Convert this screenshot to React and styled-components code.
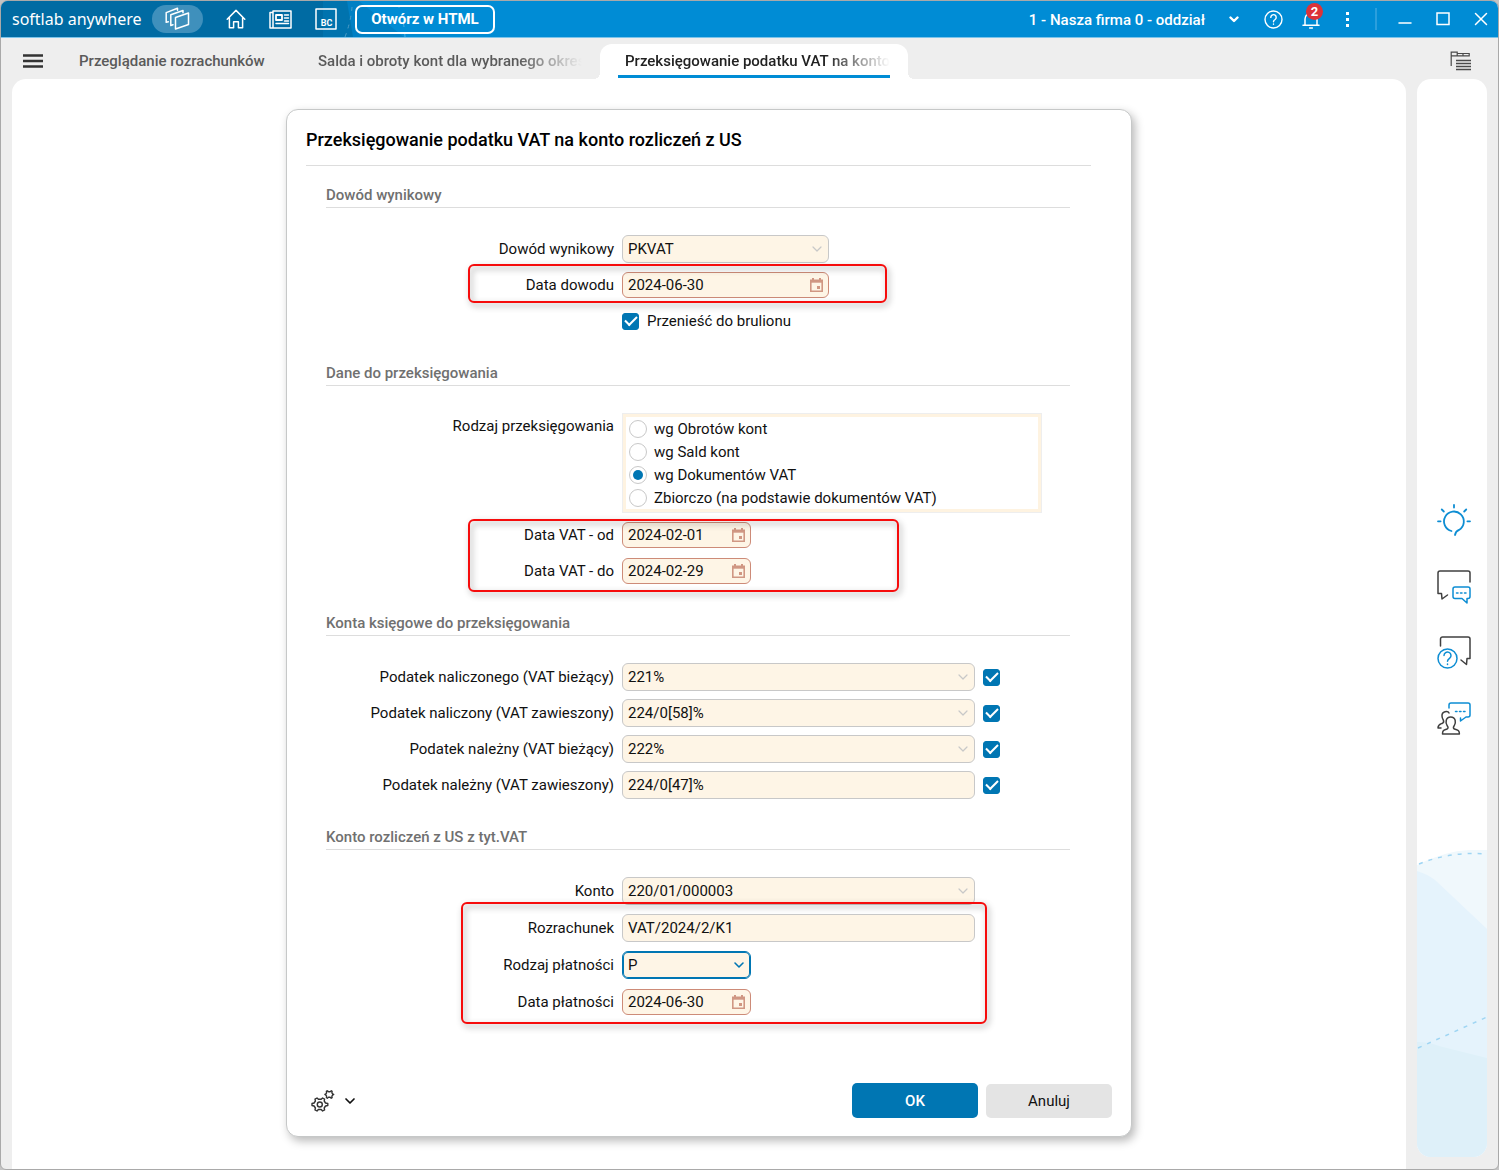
import React from 'react'
import styled, { createGlobalStyle, css } from 'styled-components'

const GlobalStyle = createGlobalStyle`
  *, *::before, *::after {
    box-sizing: border-box;
  }
  body {
    margin: 0;
    background: #c4c4c4;
    font-family: Roboto, "Liberation Sans", sans-serif;
    font-size: 15px;
    color: #111;
  }
  button, input, select {
    font: inherit;
    color: inherit;
  }
  svg {
    display: block;
    flex: none;
  }
`;

const Window = styled.div`
  display: flex;
  flex-direction: column;
  min-height: 100vh;
  border: 1px solid #a9a9a9;
  border-radius: 8px 8px 6px 6px;
  background: #eee;
  overflow: hidden;
`;

const IconButton = styled.button`
  display: flex;
  align-items: center;
  justify-content: center;
  padding: 0;
  border: 0;
  background: none;
  color: inherit;
  cursor: pointer;
`;

/* ---------- top bar ---------- */

const TopBar = styled.header`
  position: relative;
  display: flex;
  align-items: center;
  justify-content: space-between;
  height: 37px;
  padding: 0 10px 0 11px;
  background: #008cd5;
  border-bottom: 1px solid #7cc4ea;
  color: #fff;
`;

const TopBarArt = styled.svg`
  position: absolute;
  left: 0;
  top: 0;
`;

const TopLeft = styled.div`
  position: relative;
  display: flex;
  align-items: center;
`;

const Brand = styled.div`
  width: 140px;
  font-family: "Noto Sans", sans-serif;
  font-size: 16px;
  line-height: 20px;
  white-space: nowrap;
`;

const Pill = styled(IconButton)`
  width: 51px;
  height: 28px;
  border-radius: 14px;
  background: #3f90bc;
`;

const Shortcuts = styled.nav`
  display: flex;
  align-items: center;
  gap: 23px;
  margin: 0 18px 0 23px;
`;

const OpenButton = styled.button`
  width: 140px;
  height: 29px;
  padding: 0;
  border: 2px solid #fff;
  border-radius: 7px;
  background: none;
  color: #fff;
  font-weight: 700;
  white-space: nowrap;
  cursor: pointer;
`;

const TopRight = styled.div`
  display: flex;
  align-items: center;
`;

const CompanyButton = styled(IconButton)`
  gap: 24px;
  margin-right: 25px;
  padding-top: 1px;
  font-weight: 500;
  white-space: nowrap;
`;

const TopActions = styled.div`
  display: flex;
  align-items: center;
  gap: 19px;
`;

const Bell = styled(IconButton)`
  position: relative;
`;

const Badge = styled.span`
  position: absolute;
  left: 4px;
  top: -6px;
  width: 17px;
  height: 17px;
  border-radius: 50%;
  background: #dc3339;
  font-size: 13px;
  font-weight: 700;
  line-height: 17px;
  text-align: center;
`;

const Divider = styled.span`
  width: 2px;
  height: 22px;
  margin: 0 21px 0 20px;
  background: #2b9fdd;
`;

const WindowButtons = styled.div`
  display: flex;
  align-items: center;
  gap: 24px;
`;

/* ---------- tabs ---------- */

const TabBar = styled.div`
  display: flex;
  align-items: flex-end;
  height: 41px;
  padding: 0 27px 0 22px;
`;

const MenuButton = styled(IconButton)`
  height: 36px;
  margin-right: 11px;
`;

const ViewButton = styled(IconButton)`
  height: 36px;
  margin-left: auto;
`;

const Tabs = styled.div`
  display: flex;
  align-items: flex-end;
`;

const Tab = styled.button`
  position: relative;
  width: ${p => p.$width}px;
  height: 35px;
  padding: 0 18px 1px;
  border: 0;
  border-radius: 12px 12px 0 0;
  background: none;
  color: #5a5a5a;
  font-weight: 500;
  text-align: left;
  cursor: pointer;
  ${p => p.$active && css`
    background: #fff;
    color: #222;
    &::before, &::after {
      content: "";
      position: absolute;
      bottom: 0;
      width: 6px;
      height: 6px;
    }
    &::before {
      right: 100%;
      background: radial-gradient(circle at 0 0, transparent 6px, #fff 6px);
    }
    &::after {
      left: 100%;
      background: radial-gradient(circle at 100% 0, transparent 6px, #fff 6px);
    }
  `}
`;

const TabText = styled.span`
  display: block;
  height: 34px;
  padding-left: 7px;
  line-height: 35px;
  white-space: nowrap;
  overflow: hidden;
  border-bottom: 3px solid ${p => p.$active ? '#008cd5' : 'transparent'};
`;

const Fade = styled.span`
  display: block;
  overflow: hidden;
  ${p => p.$fade && css`
    mask-image: linear-gradient(to right, #000 calc(100% - 64px), transparent);
  `}
`;

/* ---------- page ---------- */

const Body = styled.div`
  flex: 1;
  display: flex;
  gap: 11px;
  padding: 0 11px;
`;

const Content = styled.main`
  flex: 1;
  display: flex;
  justify-content: center;
  align-items: flex-start;
  padding: 30px 20px 32px;
  border-radius: 14px 14px 0 0;
  background: #fff;
`;

const Aside = styled.aside`
  position: relative;
  display: flex;
  flex-direction: column;
  align-items: center;
  justify-content: center;
  gap: 32px;
  width: 70px;
  margin-bottom: 12px;
  padding: 3px 0 0 4px;
  border-radius: 14px;
  background: #fff;
  overflow: hidden;
`;

const AsideArt = styled.svg`
  position: absolute;
  left: 0;
  bottom: 0;
`;

/* ---------- dialog ---------- */

const Dialog = styled.form`
  width: 100%;
  max-width: 846px;
  border: 1px solid #c6c8c8;
  border-radius: 12px;
  background: #fff;
  box-shadow: 3px 4px 10px rgba(0, 0, 0, .28);
`;

const DialogTitle = styled.h1`
  margin: 18px 40px 0 19px;
  padding-bottom: 13px;
  border-bottom: 1px solid #ddd;
  color: #000;
  font-size: 18px;
  font-weight: 500;
  line-height: 24px;
`;

const Sections = styled.div`
  display: flex;
  flex-direction: column;
  gap: 28px;
  padding: 19px 61px 0 39px;
`;

const SectionTitle = styled.h2`
  margin: 0 0 27px;
  padding-bottom: 2px;
  border-bottom: 1px solid #ddd;
  color: #707070;
  font-size: 15px;
  font-weight: 500;
  line-height: 20px;
`;

const Rows = styled.div`
  display: flex;
  flex-direction: column;
  gap: ${p => p.$gap || 8}px;
`;

const Row = styled.div`
  display: grid;
  grid-template-columns: 288px 1fr;
  column-gap: 8px;
  align-items: ${p => p.$top ? 'start' : 'center'};
  min-height: 28px;
`;

const Label = styled.label`
  line-height: 26px;
  text-align: right;
  white-space: nowrap;
`;

const Controls = styled.div`
  display: flex;
  align-items: center;
  gap: 8px;
`;

const Highlighted = styled(Rows)`
  position: relative;
  &::after {
    content: "";
    position: absolute;
    left: ${p => p.$left}px;
    top: -${p => p.$above}px;
    bottom: -${p => p.$below}px;
    width: ${p => p.$width}px;
    border: 2px solid #f60c0c;
    border-radius: 6px;
    filter: drop-shadow(2px 3px 3px rgba(0, 0, 0, .4));
    pointer-events: none;
  }
`;

const widths = { small: 129, medium: 207, wide: 353 };

const Field = styled.div`
  display: grid;
  align-items: center;
  width: ${p => widths[p.$size]}px;
  height: ${p => p.$date ? 26 : 28}px;
  border: 1px solid ${p => p.$date ? '#cd8b78' : '#c8c8c8'};
  border-radius: 6px;
  background: #fef5e6;
  color: ${p => p.$date ? '#d09783' : '#c8c8c8'};
  ${p => p.$focused && css`
    border-color: #0076b3;
    box-shadow: inset 0 0 0 1px #0076b3;
    color: #0076b3;
  `}
  > * {
    grid-area: 1 / 1;
  }
  > svg, > button {
    justify-self: end;
    margin-right: 5px;
  }
  > svg {
    pointer-events: none;
  }
`;

const controlStyle = css`
  width: 100%;
  height: 24px;
  margin: 0;
  padding: 0 5px;
  border: 0;
  outline: 0;
  background: none;
  color: #111;
`;

const Input = styled.input`
  ${controlStyle}
`;

const Select = styled.select`
  ${controlStyle}
  appearance: none;
`;

const Checkbox = styled.input.attrs({ type: 'checkbox' })`
  appearance: none;
  display: grid;
  place-items: center;
  width: 17px;
  height: 17px;
  margin: 0;
  border: 1px solid #0076b3;
  border-radius: 3px;
  &:checked {
    background: #0076b3;
  }
  &:checked::after {
    content: "";
    width: 12px;
    height: 7px;
    margin-bottom: 4px;
    border: solid #fff;
    border-width: 0 0 2px 2px;
    transform: rotate(-45deg);
  }
`;

const CheckLabel = styled.label`
  display: flex;
  align-items: center;
  gap: 8px;
`;

const RadioGroup = styled.div`
  max-width: 420px;
  border: 1px solid #eee;
  box-shadow: inset 0 0 0 3px #fef3e1;
  padding: 3px 6px;
`;

const RadioLabel = styled.label`
  display: flex;
  align-items: center;
  gap: 7px;
  height: 23px;
`;

const Radio = styled.input.attrs({ type: 'radio' })`
  appearance: none;
  display: grid;
  place-items: center;
  width: 18px;
  height: 18px;
  margin: 0;
  border: 1px solid #c8c8c8;
  border-radius: 50%;
  &:checked::after {
    content: "";
    width: 10px;
    height: 10px;
    border-radius: 50%;
    background: #0076b3;
  }
`;

const Footer = styled.div`
  display: flex;
  align-items: flex-end;
  justify-content: space-between;
  margin-top: 67px;
  padding: 0 19px 18px 24px;
`;

const SettingsButton = styled(IconButton)`
  gap: 9px;
  height: 35px;
`;

const Actions = styled.div`
  display: flex;
  align-items: flex-end;
  gap: 8px;
`;

const Button = styled.button`
  width: 126px;
  height: 34px;
  padding: 0;
  border: 0;
  border-radius: 5px;
  background: #e4e4e4;
  cursor: pointer;
  ${p => p.$primary && css`
    height: 35px;
    background: #0076b3;
    color: #fff;
    font-weight: 500;
  `}
`;

/* ---------- icons ---------- */

const Svg = ({ w, h = w, sw = 1.5, children, ...rest }) => (
  <svg
    width={w}
    height={h}
    viewBox={`0 0 ${w} ${h}`}
    fill="none"
    stroke="currentColor"
    strokeWidth={sw}
    strokeLinejoin="round"
    strokeLinecap="round"
    aria-hidden="true"
    {...rest}
  >
    {children}
  </svg>
);

const ChevronIcon = ({ sw = 1.2 }) => (
  <Svg w={12} h={8} sw={sw}><path d="M2 2l4 4 4-4" /></Svg>
);

const CalendarIcon = () => (
  <Svg w={13} h={14} sw={1.6} strokeLinecap="butt" strokeLinejoin="miter">
    <path d="M.8 2.4h11.4v10.8H.8z" />
    <path d="M0 3.4h13" strokeWidth="2.6" />
    <path d="M3 0v3M10 0v3" strokeWidth="2" />
    <path d="M7 8h3v3H7z" fill="currentColor" stroke="none" />
  </Svg>
);

const LayersIcon = () => (
  <Svg w={25} h={24} sw={1.5}>
    <path d="M10.500 10.500L23.500 6v11.500l-13 4.500z" />
    <path d="M8 17.800l-2.200.7V7.700L18 3.500v2.300" />
    <path d="M3.300 14.800l-2.100.5V5.600L12.500 1.300v2" />
  </Svg>
);

const HomeIcon = () => (
  <Svg w={20} h={20} sw={1.5}>
    <path d="M1.2 10.2L10 1.4l8.8 8.8M3.4 8.4v10.4h4.2v-6h4.8v6h4.2V8.4" />
  </Svg>
);

const NewsIcon = () => (
  <Svg w={23} h={19} sw={1.5}>
    <path d="M4 1h18v17H1V2.5h3M4 1v17" />
    <path d="M7 5h6v5H7z" strokeWidth="1.8" />
    <path d="M15.5 5h4M15.5 8h4M15.5 11h4M7 13.6h12.5" />
  </Svg>
);

const BcIcon = () => (
  <Svg w={22} h={22} sw={1.5}>
    <path d="M1 1h20v20H1z" />
    <text
      x="11.5" y="17.5" textAnchor="middle" fontSize="9" fontWeight="700"
      fill="currentColor" stroke="none"
    >BC</text>
  </Svg>
);

const HelpIcon = () => (
  <Svg w={19} h={19} sw={1.4}>
    <circle cx="9.5" cy="9.5" r="8.5" />
    <path d="M6.8 7.4a2.7 2.7 0 1 1 4.3 2.1c-1 .7-1.6 1.2-1.6 2.2M9.5 14v.3" />
  </Svg>
);

const BellIcon = () => (
  <Svg w={18} h={20} sw={1.5}>
    <path d="M1 16.2h16M3 16v-6a6 6 0 0 1 12 0v6M7.6 19h2.8" />
  </Svg>
);

const ViewIcon = () => (
  <Svg w={21} h={20} sw={1.2} stroke="#4a4a4a" strokeLinecap="butt" strokeLinejoin="miter">
    <path d="M1.2 15V1.2h6v3.6h-6M7.2 2.500h12v2.300h-12M13 2.500v2.300" />
    <path d="M6 9.500h15M6 12.500h15M6 15.500h15M6 18.500h15" strokeWidth="1.500" />
  </Svg>
);

const GearsIcon = () => (
  <Svg w={24} h={24} sw={1.4} stroke="#333">
    <path d="M6 9l1.400 1.300h2.800L11.600 9l2 1.100-.4 1.900 1.300 2 2.300.5v2l-2.300.5-1.300 2 .4 1.900-2 1.100-1.400-1.500H7.400L6 22l-2-1.100.4-1.900-1.300-2-2.100-.5v-2l2.100-.5 1.300-2-.4-1.900z" />
    <circle cx="8.800" cy="15.500" r="2.500" />
    <path d="M16.200 1.800l1.300.9h1.600l1.200-.9.800.6-.2 1.400.7 1.100 1.100.5-1.100.7-.7 1 .2 1.500-.9.600-1.100-.9h-1.600l-1.200.9-.9-.7.200-1.400-.7-1-1-.7 1-.5.7-1.100-.2-1.400z" />
  </Svg>
);

const BulbIcon = () => (
  <Svg w={34} h={34} sw={1.8} stroke="#0d8dd3">
    <path d="M14.500 27A9.900 9.900 0 1 1 22 25.900Q18.500 27.500 18 31" />
    <path d="M17 1v2.600M1 17.300h2.600M30.400 17.300H33M4.800 5.500l2 2M29.200 5.500l-2 2" />
  </Svg>
);

const ChatIcon = () => (
  <Svg w={34} h={34} sw={1.5} stroke="#404040">
    <path d="M33 12V3a2 2 0 0 0-2-2H3a2 2 0 0 0-2 2v20.500h3.500l.5 5.500 5.500-4" />
    <g stroke="#0d8dd3">
      <path d="M18 17h13a2 2 0 0 1 2 2v7.500a2 2 0 0 1-2 2h-1v4.500l-5-4.500h-7a2 2 0 0 1-2-2V19a2 2 0 0 1 2-2z" />
      <path d="M19.500 23h1.500M23.500 23H25M27.500 23H29" />
    </g>
  </Svg>
);

const QuestionIcon = () => (
  <Svg w={34} h={34} sw={1.5} stroke="#404040">
    <path d="M3.500 10V3a2 2 0 0 1 2-2H31a2 2 0 0 1 2 2v19.500h-3l-.5 6L24 24" />
    <g stroke="#0d8dd3">
      <circle cx="10.500" cy="22.500" r="9.500" />
      <path d="M7 19.500a3.500 3.500 0 1 1 5.700 2.700c-1.300 1-2.200 1.600-2.200 3.100M10.500 28v.4" />
    </g>
  </Svg>
);

const PeopleIcon = () => (
  <Svg w={34} h={34} sw={1.5} stroke="#404040">
    <path d="M5.500 32c0-4 1.500-3.800 4.500-5 1.500-.8 1.200-1.800.2-3.200-2-3-1.700-8.800 3.500-8.800s5.500 5.800 3.500 8.800c-1 1.400-1.200 2.400.3 3.200 3 1.200 4.900 1 4.900 5z" />
    <path d="M12 11c-1-2.400-7.400-1.800-7 3 .1 2 .6 3 1.300 4 .7 1.500.6 2.500-.8 3.200-2.500 1-4.500 1-4.500 4.800h3" />
    <g stroke="#0d8dd3">
      <path d="M12 6V3a2 2 0 0 1 2-2h17a2 2 0 0 1 2 2v10a2 2 0 0 1-2 2h-2l-5.500 4V16" />
      <path d="M18.500 9.500h1.500M22.500 9.500H24M26.500 9.500H28" />
    </g>
  </Svg>
);

/* ---------- form parts ---------- */

const SelectField = ({ id, value, size, focused }) => (
  <Field $size={size} $focused={focused}>
    <Select id={id} defaultValue={value}>
      <option>{value}</option>
    </Select>
    <ChevronIcon sw={focused ? 1.6 : 1.2} />
  </Field>
);

const DateField = ({ id, value, size = 'small' }) => (
  <Field $size={size} $date>
    <Input id={id} type="text" defaultValue={value} />
    <IconButton type="button" aria-label="Kalendarz"><CalendarIcon /></IconButton>
  </Field>
);

const FormRow = ({ id, label, children }) => (
  <Row>
    <Label htmlFor={id}>{label}</Label>
    <Controls>{children}</Controls>
  </Row>
);

const kinds = [
  'wg Obrotów kont',
  'wg Sald kont',
  'wg Dokumentów VAT',
  'Zbiorczo (na podstawie dokumentów VAT)',
];

const accounts = [
  { id: 'nal-biez', label: 'Podatek naliczonego (VAT bieżący)', value: '221%', list: true },
  { id: 'nal-zaw', label: 'Podatek naliczony (VAT zawieszony)', value: '224/0[58]%', list: true },
  { id: 'nalezny-biez', label: 'Podatek należny (VAT bieżący)', value: '222%', list: true },
  { id: 'nalezny-zaw', label: 'Podatek należny (VAT zawieszony)', value: '224/0[47]%' },
];

const Header = () => (
  <TopBar>
    <TopBarArt width="440" height="36" aria-hidden="true">
      <path d="M0 0h350l-7 36H0z" fill="#006ba3" />
      <path d="M322 0h24l10 18-4 18h-30z" fill="#0073ae" />
      <path d="M346 0h12l45 36h-51z" fill="#0080c4" />
      <path d="M351 6q-1 14-7 30" stroke="#4c9cc6" strokeDasharray="4 5" fill="none" />
      <path d="M397 4q6 14 7 32" stroke="#4db2e5" strokeDasharray="3 7" fill="none" />
    </TopBarArt>
    <TopLeft>
      <Brand>softlab anywhere</Brand>
      <Pill type="button" aria-label="Moduły"><LayersIcon /></Pill>
      <Shortcuts>
        <IconButton type="button" aria-label="Start"><HomeIcon /></IconButton>
        <IconButton type="button" aria-label="Aktualności"><NewsIcon /></IconButton>
        <IconButton type="button" aria-label="Business Center"><BcIcon /></IconButton>
      </Shortcuts>
      <OpenButton type="button">Otwórz w HTML</OpenButton>
    </TopLeft>
    <TopRight>
      <CompanyButton type="button">
        1 - Nasza firma 0 - oddział
        <Svg w={10} h={7} sw={2.4}><path d="M1.500 1.500L5 5l3.500-3.500" /></Svg>
      </CompanyButton>
      <TopActions>
        <IconButton type="button" aria-label="Pomoc"><HelpIcon /></IconButton>
        <Bell type="button" aria-label="Powiadomienia"><BellIcon /><Badge>2</Badge></Bell>
        <IconButton type="button" aria-label="Więcej">
          <svg width="16" height="16" fill="currentColor" aria-hidden="true">
            <path d="M7 1h3v3H7zM7 7h3v3H7zM7 13h3v3H7z" />
          </svg>
        </IconButton>
      </TopActions>
      <Divider />
      <WindowButtons>
        <IconButton type="button" aria-label="Minimalizuj">
          <Svg w={14} h={14}><path d="M1 11h12" /></Svg>
        </IconButton>
        <IconButton type="button" aria-label="Maksymalizuj">
          <Svg w={14} h={14} strokeLinejoin="miter"><path d="M1 1h12v11.500H1z" /></Svg>
        </IconButton>
        <IconButton type="button" aria-label="Zamknij">
          <Svg w={14} h={14}><path d="M1.500 1.500l11 11M12.500 1.500l-11 11" /></Svg>
        </IconButton>
      </WindowButtons>
    </TopRight>
  </TopBar>
);

const Navigation = () => (
  <TabBar>
    <MenuButton type="button" aria-label="Menu">
      <Svg w={20} h={14} sw={2.4} strokeLinecap="butt" stroke="#333">
        <path d="M0 1.500h20M0 7h20M0 12.500h20" />
      </Svg>
    </MenuButton>
    <Tabs>
      <Tab $width={239} type="button">
        <TabText><Fade>Przeglądanie rozrachunków</Fade></TabText>
      </Tab>
      <Tab $width={307} type="button">
        <TabText><Fade $fade>Salda i obroty kont dla wybranego okresu</Fade></TabText>
      </Tab>
      <Tab $width={308} $active type="button">
        <TabText $active><Fade $fade>Przeksięgowanie podatku VAT na konto rozliczeń z US</Fade></TabText>
      </Tab>
    </Tabs>
    <ViewButton type="button" aria-label="Widok"><ViewIcon /></ViewButton>
  </TabBar>
);

const SidePanel = () => (
  <Aside>
    <AsideArt width="70" height="307" aria-hidden="true">
      <path d="M0 15Q28 1 52 0H70V307H0z" fill="#f0f8fc" />
      <path d="M0 21q10 3 18 9L70 79V307H0z" fill="#e5f3fc" />
      <path d="M0 192q12 0 22 4l48 12v99H0z" fill="#def0f9" />
      <path d="M2 14Q34 1 70 4" stroke="#9fd5f3" strokeWidth="1.5" strokeDasharray="4 6" fill="none" />
      <path d="M1 198L70 167" stroke="#9fd5f3" strokeWidth="1.5" strokeDasharray="4 6" fill="none" />
    </AsideArt>
    <IconButton type="button" aria-label="Wskazówki"><BulbIcon /></IconButton>
    <IconButton type="button" aria-label="Czat"><ChatIcon /></IconButton>
    <IconButton type="button" aria-label="Pytania"><QuestionIcon /></IconButton>
    <IconButton type="button" aria-label="Społeczność"><PeopleIcon /></IconButton>
  </Aside>
);

const VatDialog = () => (
  <Dialog onSubmit={e => e.preventDefault()}>
    <DialogTitle>Przeksięgowanie podatku VAT na konto rozliczeń z US</DialogTitle>
    <Sections>
      <section>
        <SectionTitle>Dowód wynikowy</SectionTitle>
        <Rows>
          <FormRow id="dowod" label="Dowód wynikowy">
            <SelectField id="dowod" value="PKVAT" size="medium" />
          </FormRow>
          <Highlighted $left={142} $width={419} $above={7} $below={4}>
            <FormRow id="data-dowodu" label="Data dowodu">
              <DateField id="data-dowodu" value="2024-06-30" size="medium" />
            </FormRow>
          </Highlighted>
          <Row>
            <span />
            <CheckLabel><Checkbox defaultChecked />Przenieść do brulionu</CheckLabel>
          </Row>
        </Rows>
      </section>

      <section>
        <SectionTitle>Dane do przeksięgowania</SectionTitle>
        <Rows>
          <Row $top>
            <Label as="span" id="rodzaj">Rodzaj przeksięgowania</Label>
            <RadioGroup role="radiogroup" aria-labelledby="rodzaj">
              {kinds.map((kind, i) => (
                <RadioLabel key={kind}>
                  <Radio name="rodzaj" defaultChecked={i === 2} />{kind}
                </RadioLabel>
              ))}
            </RadioGroup>
          </Row>
          <Highlighted $left={142} $width={431} $above={2} $below={7}>
            <FormRow id="vat-od" label="Data VAT - od">
              <DateField id="vat-od" value="2024-02-01" />
            </FormRow>
            <FormRow id="vat-do" label="Data VAT - do">
              <DateField id="vat-do" value="2024-02-29" />
            </FormRow>
          </Highlighted>
        </Rows>
      </section>

      <section>
        <SectionTitle>Konta księgowe do przeksięgowania</SectionTitle>
        <Rows>
          {accounts.map(a => (
            <FormRow key={a.id} id={a.id} label={a.label}>
              {a.list
                ? <SelectField id={a.id} value={a.value} size="wide" />
                : <Field $size="wide"><Input id={a.id} defaultValue={a.value} /></Field>}
              <Checkbox defaultChecked aria-label={a.label} />
            </FormRow>
          ))}
        </Rows>
      </section>

      <section>
        <SectionTitle>Konto rozliczeń z US z tyt.VAT</SectionTitle>
        <Rows $gap={9}>
          <FormRow id="konto" label="Konto">
            <SelectField id="konto" value="220/01/000003" size="wide" />
          </FormRow>
          <Highlighted $gap={9} $left={135} $width={526} $above={12} $below={8}>
            <FormRow id="rozrachunek" label="Rozrachunek">
              <Field $size="wide"><Input id="rozrachunek" defaultValue="VAT/2024/2/K1" /></Field>
            </FormRow>
            <FormRow id="platnosc" label="Rodzaj płatności">
              <SelectField id="platnosc" value="P" size="small" focused />
            </FormRow>
            <FormRow id="data-platnosci" label="Data płatności">
              <DateField id="data-platnosci" value="2024-06-30" />
            </FormRow>
          </Highlighted>
        </Rows>
      </section>
    </Sections>

    <Footer>
      <SettingsButton type="button" aria-label="Ustawienia">
        <GearsIcon />
        <ChevronIcon sw={1.7} />
      </SettingsButton>
      <Actions>
        <Button $primary type="submit">OK</Button>
        <Button type="button">Anuluj</Button>
      </Actions>
    </Footer>
  </Dialog>
);

export default function App() {
  return (
    <>
      <GlobalStyle />
      <Window>
        <Header />
        <Navigation />
        <Body>
          <Content>
            <VatDialog />
          </Content>
          <SidePanel />
        </Body>
      </Window>
    </>
  )
}
